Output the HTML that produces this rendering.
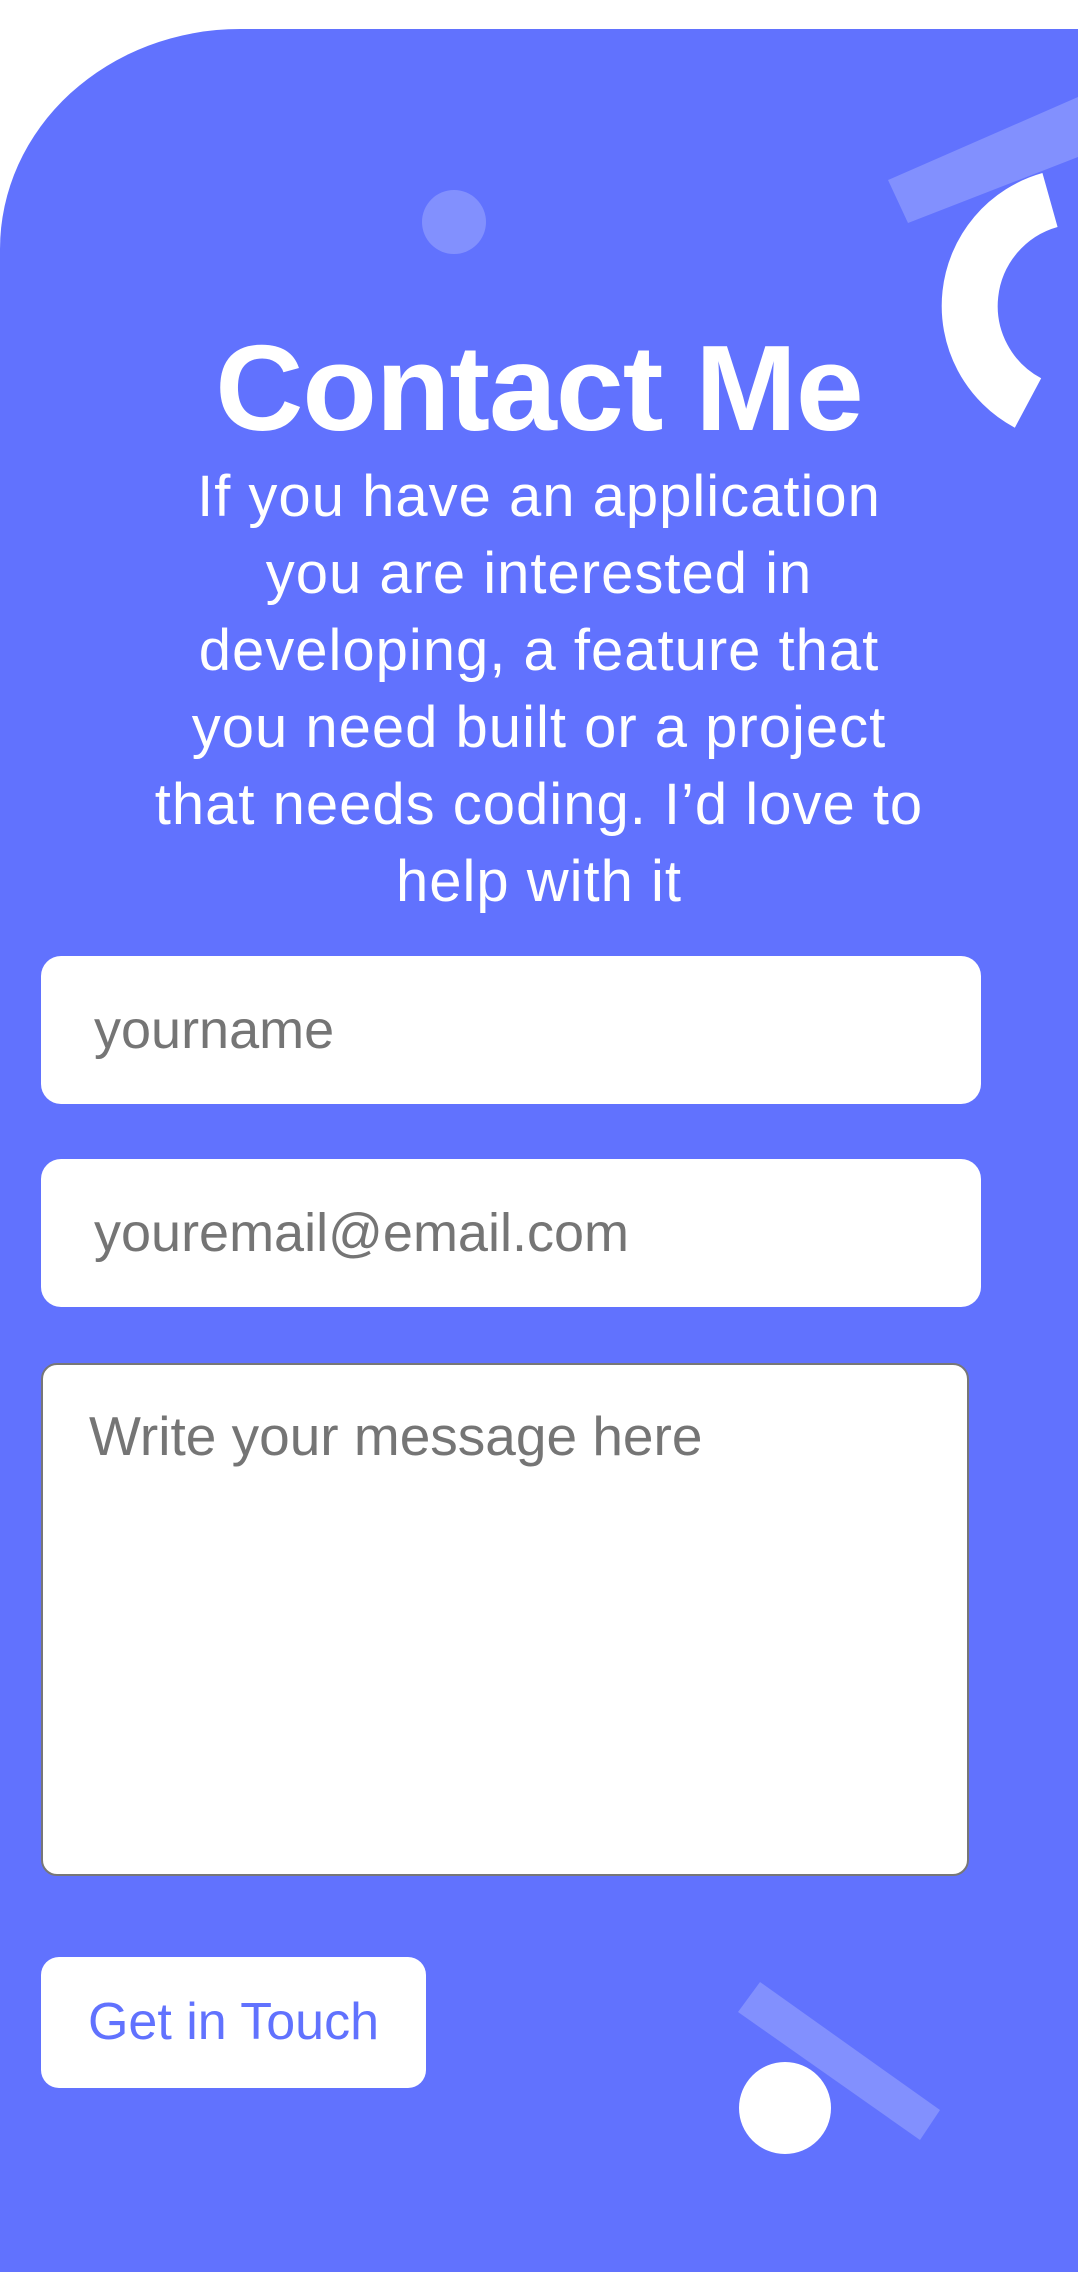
<!DOCTYPE html>
<html><head><meta charset="utf-8"><style>
html,body{margin:0;padding:0;background:#fff;}
body{width:1078px;height:2272px;position:relative;overflow:hidden;font-family:"Liberation Sans",sans-serif;}
.bg{position:absolute;left:0;top:29px;width:1078px;height:2243px;background:#6172fe;border-top-left-radius:240px 220px;}
svg.deco{position:absolute;left:0;top:0;}
h1{position:absolute;left:0;width:1078px;top:318px;margin:0;text-align:center;color:#fff;font-size:122px;font-weight:bold;line-height:140px;letter-spacing:-1px;}
p{position:absolute;left:0;width:1078px;top:458px;margin:0;text-align:center;color:#fff;font-size:58px;line-height:77px;letter-spacing:1px;white-space:nowrap;}
.inp{position:absolute;left:41px;width:940px;height:148px;background:#fff;border-radius:20px;box-sizing:border-box;padding-left:53px;color:#757575;font-size:54px;line-height:148px;}
.ta{position:absolute;left:41px;top:1363px;width:928px;height:513px;background:#fff;border:2px solid #777;border-radius:16px;box-sizing:border-box;padding:38px 0 0 46px;color:#757575;font-size:55px;line-height:1.2;}
.btn{position:absolute;left:41px;top:1957px;width:385px;height:131px;background:#fff;border-radius:18px;color:#6172fe;font-size:52px;line-height:131px;text-align:center;}
</style></head><body>
<div class="bg"></div>
<svg class="deco" width="1078" height="2272">
<circle cx="454" cy="222" r="32" fill="#8290fe"/>
<polygon points="888,180 1078,97 1078,157 908,223" fill="#8290fe"/>
<path d="M1050 200 A110 110 0 0 0 1028 403" fill="none" stroke="#fff" stroke-width="56"/>
<polygon points="760,1982 940,2110 920,2140 738,2012" fill="#8290fe"/>
<circle cx="785" cy="2108" r="46" fill="#fff"/>
</svg>
<h1>Contact Me</h1>
<p>If you have an application<br>you are interested in<br>developing, a feature that<br>you need built or a project<br>that needs coding. I’d love to<br>help with it</p>
<div class="inp" style="top:956px">yourname</div>
<div class="inp" style="top:1159px">youremail@email.com</div>
<div class="ta">Write your message here</div>
<div class="btn">Get in Touch</div>
</body></html>
